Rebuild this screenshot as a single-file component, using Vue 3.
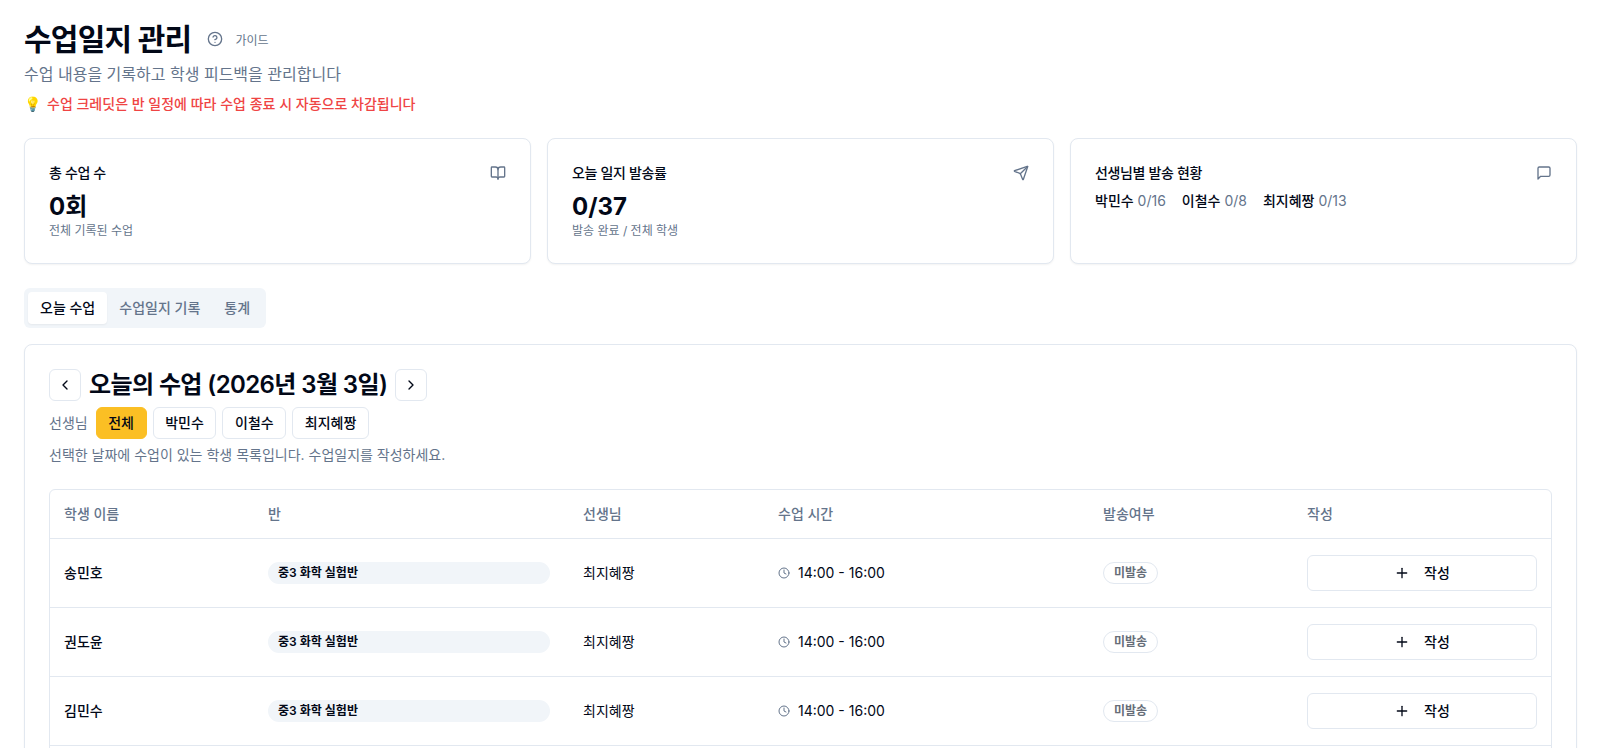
<template>
  <div class="page">
    <header class="head">
      <div class="title-row">
        <h1>수업일지 관리</h1>
        <button class="guide">
          <svg class="guide-icon" viewBox="0 0 24 24"><circle cx="12" cy="12" r="10" /><path d="M9.09 9a3 3 0 0 1 5.83 1c0 2-3 3-3 3" /><path d="M12 17h.01" /></svg>
          <span>가이드</span>
        </button>
      </div>
      <p class="sub">수업 내용을 기록하고 학생 피드백을 관리합니다</p>
      <p class="notice"><span class="bulb">💡</span>수업 크레딧은 반 일정에 따라 수업 종료 시 자동으로 차감됩니다</p>
    </header>

    <section class="stats">
      <div class="card stat">
        <div class="stat-top">
          <span class="stat-title">총 수업 수</span>
          <svg class="ico" viewBox="0 0 24 24"><path d="M12 7v14" /><path d="M3 18a1 1 0 0 1-1-1V4a1 1 0 0 1 1-1h5a4 4 0 0 1 4 4 4 4 0 0 1 4-4h5a1 1 0 0 1 1 1v13a1 1 0 0 1-1 1h-6a3 3 0 0 0-3 3 3 3 0 0 0-3-3z" /></svg>
        </div>
        <div class="stat-num">0회</div>
        <div class="stat-desc">전체 기록된 수업</div>
      </div>
      <div class="card stat">
        <div class="stat-top">
          <span class="stat-title">오늘 일지 발송률</span>
          <svg class="ico" viewBox="0 0 24 24"><path d="M14.536 21.686a.5.5 0 0 0 .937-.024l6.5-19a.496.496 0 0 0-.635-.635l-19 6.5a.5.5 0 0 0-.024.937l7.93 3.18a2 2 0 0 1 1.112 1.11z" /><path d="m21.854 2.147-10.94 10.939" /></svg>
        </div>
        <div class="stat-num">0/37</div>
        <div class="stat-desc">발송 완료 / 전체 학생</div>
      </div>
      <div class="card stat">
        <div class="stat-top">
          <span class="stat-title">선생님별 발송 현황</span>
          <svg class="ico" viewBox="0 0 24 24"><path d="M21 15a2 2 0 0 1-2 2H7l-4 4V5a2 2 0 0 1 2-2h14a2 2 0 0 1 2 2z" /></svg>
        </div>
        <div class="teacher-stats">
          <span v-for="t in teacherStats" :key="t.name"><b>{{ t.name }}</b> {{ t.count }}</span>
        </div>
      </div>
    </section>

    <nav class="tabs">
      <button v-for="(tab, i) in tabs" :key="tab" class="tab" :class="{ active: i === 0 }">{{ tab }}</button>
    </nav>

    <section class="card panel">
      <div class="date-row">
        <button class="arrow"><svg viewBox="0 0 24 24"><path d="m15 18-6-6 6-6" /></svg></button>
        <h2>오늘의 수업 (2026년 3월 3일)</h2>
        <button class="arrow"><svg viewBox="0 0 24 24"><path d="m9 18 6-6-6-6" /></svg></button>
      </div>
      <div class="filter-row">
        <span class="filter-label">선생님</span>
        <button v-for="(t, i) in teachers" :key="t" class="filter" :class="{ on: i === 0 }">{{ t }}</button>
      </div>
      <p class="panel-desc">선택한 날짜에 수업이 있는 학생 목록입니다. 수업일지를 작성하세요.</p>

      <div class="table-wrap">
        <table>
          <thead>
            <tr>
              <th class="c-name">학생 이름</th>
              <th class="c-class">반</th>
              <th class="c-teacher">선생님</th>
              <th class="c-time">수업 시간</th>
              <th class="c-state">발송여부</th>
              <th class="c-write">작성</th>
            </tr>
          </thead>
          <tbody>
            <tr v-for="s in students" :key="s">
              <td class="name">{{ s }}</td>
              <td class="class-cell"><div class="class-pill">중3 화학 실험반</div></td>
              <td>최지혜짱</td>
              <td>
                <div class="time">
                  <svg viewBox="0 0 24 24"><circle cx="12" cy="12" r="10" /><path d="M12 6v6l4 2" /></svg>
                  14:00 - 16:00
                </div>
              </td>
              <td><span class="state">미발송</span></td>
              <td>
                <button class="write">
                  <svg viewBox="0 0 24 24"><path d="M5 12h14" /><path d="M12 5v14" /></svg>
                  작성
                </button>
              </td>
            </tr>
          </tbody>
        </table>
      </div>
    </section>
  </div>
</template>

<script setup>
const tabs = ["오늘 수업", "수업일지 기록", "통계"];
const teachers = ["전체", "박민수", "이철수", "최지혜짱"];
const teacherStats = [
  { name: "박민수", count: "0/16" },
  { name: "이철수", count: "0/8" },
  { name: "최지혜짱", count: "0/13" },
];
const students = ["송민호", "권도윤", "김민수", "이서연"];
</script>

<style>
html,
body {
  margin: 0;
  height: 748px;
  overflow: hidden;
  background: #fff;
}
</style>

<style scoped>
.page {
  padding: 24px 21px 24px 24px;
  font-family: Inter, "Noto Sans CJK KR", sans-serif;
  color: #020817;
}
button {
  font-family: inherit;
  cursor: pointer;
}
.title-row {
  display: flex;
  align-items: center;
  height: 30px;
  gap: 16px;
}
h1 {
  margin: 0;
  font-size: 30px;
  line-height: 30px;
  font-weight: 700;
  letter-spacing: -0.75px;
}
.guide {
  display: flex;
  align-items: center;
  gap: 12px;
  padding: 0;
  border: 0;
  background: none;
  font-size: 12px;
  color: #64748b;
}
.guide-icon {
  width: 16px;
  height: 16px;
  fill: none;
  stroke: #64748b;
  stroke-width: 2;
  stroke-linecap: round;
  stroke-linejoin: round;
}
.sub {
  margin: 8px 0 0;
  font-size: 16px;
  line-height: 24px;
  color: #64748b;
}
.notice {
  margin: 8px 0 0;
  font-size: 14px;
  line-height: 20px;
  color: #ef4444;
  font-weight: 500;
}
.bulb {
  margin-right: 6px;
}
.card {
  background: #fff;
  border: 1px solid #e2e8f0;
  border-radius: 8px;
  box-shadow: 0 1px 2px rgba(0, 0, 0, 0.05);
  box-sizing: border-box;
}
.stats {
  display: grid;
  grid-template-columns: repeat(3, 1fr);
  gap: 16px;
  margin-top: 24px;
}
.stat {
  height: 126px;
  padding: 24px;
}
.stat-top {
  display: flex;
  justify-content: space-between;
  align-items: center;
  height: 20px;
}
.stat-title {
  font-size: 14px;
  line-height: 20px;
  font-weight: 500;
  letter-spacing: -0.35px;
}
.ico {
  width: 16px;
  height: 16px;
  fill: none;
  stroke: #64748b;
  stroke-width: 2;
  stroke-linecap: round;
  stroke-linejoin: round;
}
.stat-num {
  margin-top: 8px;
  font-size: 24px;
  line-height: 32px;
  font-weight: 700;
}
.stat-desc {
  font-size: 12px;
  line-height: 16px;
  color: #64748b;
}
.teacher-stats {
  display: flex;
  gap: 16px;
  margin-top: 8px;
  font-size: 14px;
  line-height: 20px;
  color: #64748b;
}
.teacher-stats b {
  color: #020817;
  font-weight: 500;
}
.tabs {
  display: inline-flex;
  margin-top: 24px;
  padding: 4px;
  border-radius: 6px;
  background: #f1f5f9;
  vertical-align: top;
}
.tab {
  padding: 6px 12px;
  border: 0;
  border-radius: 4px;
  background: none;
  font-size: 14px;
  line-height: 20px;
  font-weight: 500;
  color: #64748b;
}
.tab.active {
  background: #fff;
  color: #020817;
  box-shadow: 0 1px 2px rgba(0, 0, 0, 0.05);
}
.panel {
  margin-top: 16px;
  padding: 24px;
}
.date-row {
  display: flex;
  align-items: center;
  gap: 8px;
}
h2 {
  margin: 0;
  font-size: 24px;
  line-height: 24px;
  font-weight: 600;
  letter-spacing: -0.6px;
}
.arrow {
  display: flex;
  align-items: center;
  justify-content: center;
  width: 32px;
  height: 32px;
  padding: 0;
  background: #fff;
  border: 1px solid #e2e8f0;
  border-radius: 6px;
}
.arrow svg {
  width: 16px;
  height: 16px;
  fill: none;
  stroke: #020817;
  stroke-width: 2;
  stroke-linecap: round;
  stroke-linejoin: round;
}
.filter-row {
  display: flex;
  align-items: center;
  gap: 6px;
  margin-top: 6px;
}
.filter-label {
  margin-right: 2px;
  font-size: 14px;
  line-height: 20px;
  color: #64748b;
}
.filter {
  height: 32px;
  padding: 0 11.6px;
  background: #fff;
  border: 1px solid #e2e8f0;
  border-radius: 6px;
  font-size: 14px;
  line-height: 20px;
  font-weight: 500;
  color: #020817;
}
.filter.on {
  background: #fbbf24;
  border-color: #fbbf24;
}
.panel-desc {
  margin: 6px 0 0;
  font-size: 14px;
  line-height: 20px;
  color: #64748b;
}
.table-wrap {
  margin-top: 24px;
  border: 1px solid #e2e8f0;
  border-radius: 6px;
  overflow: hidden;
}
table {
  width: 100%;
  border-collapse: collapse;
  table-layout: fixed;
  font-size: 14px;
  line-height: 20px;
}
th,
td {
  padding: 0 14px;
  box-sizing: border-box;
}
th {
  height: 48px;
  text-align: left;
  font-weight: 500;
  color: #64748b;
}
.c-name { width: 204px; }
.c-class { width: 315px; }
.c-teacher { width: 195px; }
.c-time { width: 325px; }
.c-state { width: 204px; }
td {
  height: 69px;
  border-top: 1px solid #e2e8f0;
}
.name {
  font-weight: 500;
}
.class-cell {
  padding-right: 19px;
}
.class-pill {
  height: 22px;
  padding: 0 10px;
  border-radius: 11px;
  background: #f1f5f9;
  font-size: 12px;
  line-height: 22px;
  font-weight: 600;
}
.time {
  display: flex;
  align-items: center;
  gap: 8px;
}
.time svg {
  width: 12px;
  height: 12px;
  fill: none;
  stroke: #64748b;
  stroke-width: 2;
  stroke-linecap: round;
  stroke-linejoin: round;
}
.state {
  display: inline-block;
  height: 22px;
  box-sizing: border-box;
  padding: 0 10px;
  border: 1px solid #e2e8f0;
  border-radius: 11px;
  font-size: 12px;
  line-height: 20px;
  font-weight: 600;
  color: #666d78;
}
.write {
  display: flex;
  align-items: center;
  justify-content: center;
  gap: 14px;
  width: 100%;
  height: 36px;
  background: #fff;
  border: 1px solid #e2e8f0;
  border-radius: 6px;
  font-size: 14px;
  line-height: 20px;
  font-weight: 500;
  color: #020817;
}
.write svg {
  width: 16px;
  height: 16px;
  fill: none;
  stroke: #020817;
  stroke-width: 2;
  stroke-linecap: round;
  stroke-linejoin: round;
}
</style>
